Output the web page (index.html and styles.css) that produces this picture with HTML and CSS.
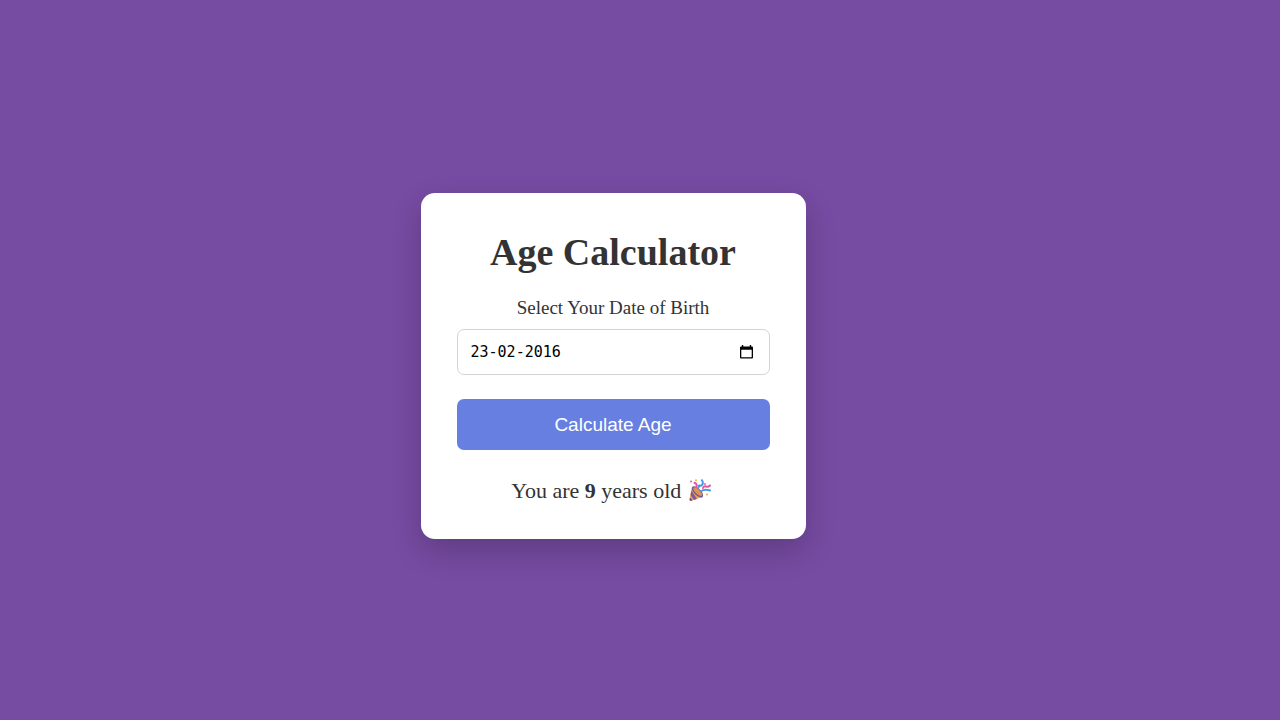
FILE: index.html
```html
<!DOCTYPE html>
<html lang="en">
<head>
<meta charset="utf-8">
<meta name="viewport" content="width=device-width, initial-scale=1">
<title>Age Calculator</title>
<link rel="stylesheet" href="styles.css">
</head>
<body>
<main class="card">
  <h1 class="title">Age Calculator</h1>
  <label class="label" for="dob">Select Your Date of Birth</label>
  <div class="field">
    <input class="date" id="dob" type="text" value="23-02-2016">
    <button class="picker" type="button" aria-label="Open calendar">
      <svg class="calendar" viewBox="0 0 14 15" aria-hidden="true">
        <path fill="#000" fill-rule="evenodd" d="M2 0h1.500v1.500h7V0H12v1.500h.8q1.200 0 1.200 1.200v10.600q0 1.200-1.200 1.200H1.200Q0 14.500 0 13.300V2.700Q0 1.500 1.200 1.500H2zM1.400 5.200v7.900h11.200V5.200z"/>
      </svg>
    </button>
  </div>
  <button class="submit" type="button">Calculate Age</button>
  <p class="result">You are <strong>9</strong> years old
    <svg class="party" viewBox="0 0 22 22" role="img" aria-label="Party popper">
      <path fill="#eda04a" d="M3 7.500 L13.500 18 L2 21.800 Q.3 22 .6 20.500z"/>
      <path fill="#7d5a9a" d="M2.300 11.500 L8 20 L5 21 L1.500 16z"/>
      <path fill="#6b4a86" d="M.9 18.500l2.800 2.900L2 21.800Q.3 22 .6 20.500z"/>
      <ellipse cx="8.500" cy="12.800" rx="7.200" ry="3.400" transform="rotate(45 8.500 12.800)" fill="#75588f"/>
      <ellipse cx="8.700" cy="12.600" rx="5.700" ry="2.300" transform="rotate(45 8.700 12.600)" fill="#dc9357"/>
      <g fill="none" stroke-width="2" stroke-linecap="round">
        <path stroke="#e455a8" d="M5.500 3.800q3 .8 1.900 4.600M14 9q1-2.500 3-1.500t4-1"/>
        <path stroke="#459be5" d="M12.800 1.200q1.600 2 .8 4t-2.700 1.300q-1.800-.3-1.100 1.500M12 12.300q3.500-2.600 9-.8"/>
      </g>
      <g fill="#e455a8"><circle cx="2" cy="2.500" r="1"/><circle cx="16" cy="5" r=".9"/></g>
      <g fill="#f0a637"><circle cx="7" cy="1.200" r=".9"/><circle cx="18" cy="15.500" r="1"/></g>
    </svg>
  </p>
</main>
</body>
</html>
```
FILE: styles.css
```css
* {
  box-sizing: border-box;
}

body {
  margin: 0;
  min-height: 100vh;
  padding: 12px 54px 0 0;
  display: flex;
  align-items: center;
  justify-content: center;
  background: #764ba2;
  color: #333;
  font-family: "Liberation Serif", "Times New Roman", serif;
}

.card {
  width: 100%;
  max-width: 385px;
  padding: 36px;
  border-radius: 14px;
  background: #fff;
  box-shadow: 0 12px 30px rgba(0, 0, 0, 0.2);
  text-align: center;
}

.title {
  margin: 0 0 22px;
  font-size: 38px;
  line-height: 46px;
}

.label {
  display: block;
  margin-bottom: 10px;
  font-size: 19px;
  line-height: 22px;
}

.field {
  display: flex;
  align-items: center;
  margin-bottom: 24px;
  padding: 0 16px 0 13px;
  border: 1px solid #d4d4d4;
  border-radius: 7px;
}

.date {
  flex: 1;
  min-width: 0;
  height: 44px;
  padding: 0;
  border: 0;
  outline: 0;
  background: none;
  color: #000;
  font: 15px "DejaVu Sans Mono", Consolas, monospace;
}

.picker {
  display: flex;
  padding: 0;
  border: 0;
  background: none;
  cursor: pointer;
}

.calendar {
  width: 13px;
  height: 14px;
}

.submit {
  width: 100%;
  padding: 14px;
  border: 0;
  border-radius: 7px;
  background: #667fe0;
  color: #fff;
  font: 19px/23px "Liberation Sans", Arial, sans-serif;
  cursor: pointer;
}

.result {
  margin: 28px 0 0;
  font-size: 22px;
  line-height: 25px;
}

.party {
  width: 22px;
  height: 22px;
  margin: 0 4px 0 2px;
  vertical-align: -3px;
}
```
